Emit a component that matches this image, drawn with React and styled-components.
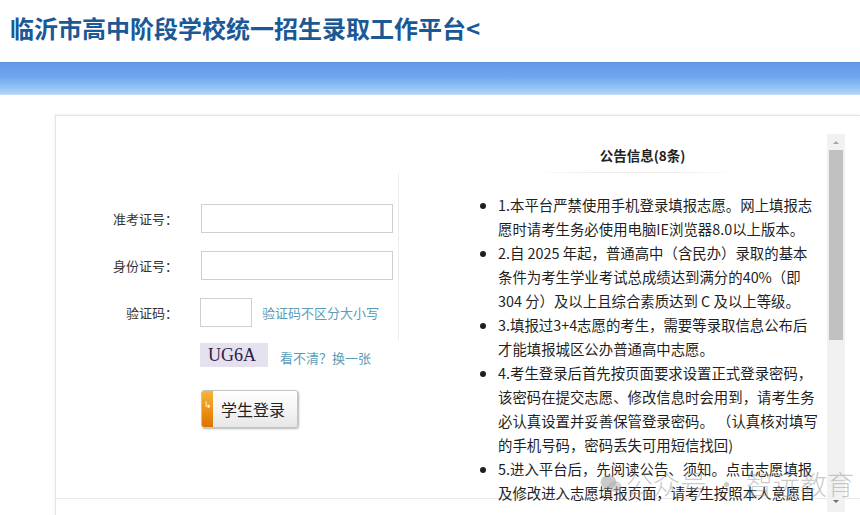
import React from "react";
import styled, { createGlobalStyle } from "styled-components";

const GlobalStyle = createGlobalStyle`
  html, body {
    margin: 0;
    padding: 0;
    background: #ffffff;
    overflow: hidden;
  }
  body {
    font-family: "Noto Sans CJK SC", "Noto Sans", sans-serif;
    color: #222;
  }
`;

const Page = styled.div`
  position: relative;
  width: 860px;
  height: 515px;
  overflow: hidden;
`;

const Header = styled.header`
  height: 62px;
  padding: 13px 0 0 10px;
  box-sizing: border-box;
`;

const Title = styled.h1`
  margin: 0;
  font-size: 24px;
  line-height: 30px;
  font-weight: 700;
  color: #1b5896;
`;

const Banner = styled.div`
  height: 33px;
  box-sizing: border-box;
  border-top: 1px solid #5d8fd4;
  border-bottom: 1px solid #c4dcf4;
  background: linear-gradient(to bottom, #6699e6 0%, #6ea5ee 45%, #8fc0f5 75%, #b2d4f8 100%);
`;

const Content = styled.div`
  padding: 20px 0 0 55px;
`;

const Card = styled.div`
  border-top: 1px solid #f0e0d9;
  border-left: 1px solid #f0e0d9;
  box-shadow: -1px -1px 2px rgba(230, 200, 190, 0.25);
  height: 420px;
`;

const Main = styled.div`
  display: flex;
  align-items: flex-start;
  height: 382px;
  border-bottom: 1px solid #efe7e4;
`;

const FormPanel = styled.div`
  width: 343px;
  margin-top: 57px;
`;

const Fields = styled.div`
  display: grid;
  grid-template-columns: 122px 192px;
  grid-auto-rows: 29px;
  column-gap: 23px;
  row-gap: 18px;
  align-items: center;
  height: 168px;
  box-sizing: border-box;
  padding: 31px 5px 0 0;
  border-right: 1px solid #ececec;
`;

const Label = styled.label`
  text-align: right;
  font-size: 13px;
  color: #333;
`;

const Input = styled.input`
  box-sizing: border-box;
  width: ${({ $w }) => $w || "192px"};
  height: 29px;
  border: 1px solid #cfcfcf;
  background: #fff;
  outline: none;
`;

const CodeRow = styled.div`
  display: flex;
  align-items: center;
  gap: 10px;
  margin-left: -1px;
`;

const Hint = styled.span`
  font-size: 13px;
  color: #5b9db8;
  white-space: nowrap;
`;

const Extras = styled.div`
  display: flex;
  flex-direction: column;
  align-items: flex-start;
  padding: 2px 0 0 144px;
`;

const CaptchaRow = styled.div`
  display: flex;
  align-items: flex-end;
  gap: 12px;
`;

const Captcha = styled.div`
  width: 68px;
  height: 24px;
  background: #e5e1ef;
  font-family: "Liberation Serif", "DejaVu Serif", serif;
  font-size: 18px;
  line-height: 24px;
  color: #2a1c48;
  padding-left: 8px;
  box-sizing: border-box;
`;

const LoginButton = styled.button`
  display: flex;
  align-items: stretch;
  margin-top: 23px;
  margin-left: 1px;
  width: 97px;
  height: 38px;
  padding: 0;
  border: 1px solid #c4c4c4;
  border-radius: 3px;
  background: linear-gradient(to bottom, #ffffff 0%, #f4f4f4 55%, #e6e6e6 100%);
  box-shadow: 1px 1px 2px rgba(0, 0, 0, 0.3);
  overflow: hidden;
  cursor: pointer;
  font-family: inherit;
`;

const Stripe = styled.span`
  width: 11px;
  background: linear-gradient(to bottom, #f6b43a 0%, #ea8d10 60%, #d97400 100%);
  color: #fff;
  font-size: 9px;
  line-height: 1;
  padding-top: 9px;
  text-align: center;
`;

const ButtonText = styled.span`
  flex: 1;
  font-size: 16px;
  line-height: 36px;
  color: #222;
  text-align: left;
  padding-left: 8px;
`;

const NoticePanel = styled.section`
  display: flex;
  margin: 18px 0 0 59px;
  width: 387px;
  height: 378px;
`;

const NoticeBody = styled.div`
  flex: 1;
  overflow: hidden;
  padding-top: 9px;
`;

const NoticeTitle = styled.h2`
  margin: 0;
  font-size: 13.5px;
  line-height: 24px;
  font-weight: 700;
  text-align: center;
  color: #222;
`;

const Divider = styled.div`
  width: 180px;
  height: 1px;
  margin: 5px auto 20px;
  background: linear-gradient(to right, #fafafa, #ececec 30%, #ececec 70%, #fafafa);
  transform: translateX(-8px);
`;

const List = styled.ul`
  margin: 0;
  padding-left: 40px;
  font-size: 14.4px;
  line-height: 24px;
  color: #1f1f1f;
`;

const Item = styled.li``;

const Line = styled.span`
  display: block;
  white-space: nowrap;
`;

const ScrollTrack = styled.div`
  width: 18px;
  background: #f1f1f1;
  display: flex;
  flex-direction: column;
  align-items: center;
`;

const Arrow = styled.span`
  width: 0;
  height: 0;
  border-left: 3px solid transparent;
  border-right: 3px solid transparent;
  ${({ $down }) =>
    $down
      ? "border-top: 3px solid #6e6e6e; margin: auto 0 9px;"
      : "border-bottom: 3px solid #a8a8a8; margin: 7px 0 6px;"}
`;

const Thumb = styled.div`
  width: 14px;
  height: 190px;
  background: #c1c1c1;
`;

const Watermark = styled.div`
  position: absolute;
  left: 600px;
  top: 464px;
  display: flex;
  align-items: center;
  gap: 4px;
  font-size: 27px;
  font-weight: 300;
  color: rgba(150, 150, 150, 0.5);
  white-space: nowrap;
  pointer-events: none;
`;

const notices = [
  [
    "1.本平台严禁使用手机登录填报志愿。网上填报志",
    "愿时请考生务必使用电脑IE浏览器8.0以上版本。",
  ],
  [
    "2.自 2025 年起，普通高中（含民办）录取的基本",
    "条件为考生学业考试总成绩达到满分的40%（即",
    "304 分）及以上且综合素质达到 C 及以上等级。",
  ],
  [
    "3.填报过3+4志愿的考生，需要等录取信息公布后",
    "才能填报城区公办普通高中志愿。",
  ],
  [
    "4.考生登录后首先按页面要求设置正式登录密码，",
    "该密码在提交志愿、修改信息时会用到，请考生务",
    "必认真设置并妥善保管登录密码。 （认真核对填写",
    "的手机号码，密码丢失可用短信找回)",
  ],
  [
    "5.进入平台后，先阅读公告、须知。点击志愿填报",
    "及修改进入志愿填报页面，请考生按照本人意愿自",
  ],
];

const ChatIcon = () => (
  <svg width="22" height="20" viewBox="0 0 22 20">
    <ellipse cx="8.5" cy="8" rx="8" ry="6.8" fill="rgba(150,150,150,0.5)" />
    <path d="M4 13 L3 17 L7.5 14.2 Z" fill="rgba(150,150,150,0.5)" />
    <ellipse cx="15" cy="12.5" rx="6.5" ry="5.5" fill="rgba(175,175,175,0.5)" />
  </svg>
);

const App = () => {
  return (
    <Page>
      <GlobalStyle />
      <Header>
        <Title>临沂市高中阶段学校统一招生录取工作平台&lt;</Title>
      </Header>
      <Banner />
      <Content>
        <Card>
          <Main>
            <FormPanel>
              <Fields>
                <Label>准考证号：</Label>
                <Input type="text" />
                <Label>身份证号：</Label>
                <Input type="text" />
                <Label>验证码：</Label>
                <CodeRow>
                  <Input type="text" $w="52px" />
                  <Hint>验证码不区分大小写</Hint>
                </CodeRow>
              </Fields>
              <Extras>
                <CaptchaRow>
                  <Captcha>UG6A</Captcha>
                  <Hint>看不清？换一张</Hint>
                </CaptchaRow>
                <LoginButton type="button">
                  <Stripe>↳</Stripe>
                  <ButtonText>学生登录</ButtonText>
                </LoginButton>
              </Extras>
            </FormPanel>
            <NoticePanel>
              <NoticeBody>
                <NoticeTitle>公告信息(8条)</NoticeTitle>
                <Divider />
                <List>
                  {notices.map((lines, i) => (
                    <Item key={i}>
                      {lines.map((l, j) => (
                        <Line key={j}>{l}</Line>
                      ))}
                    </Item>
                  ))}
                </List>
              </NoticeBody>
              <ScrollTrack>
                <Arrow />
                <Thumb />
                <Arrow $down />
              </ScrollTrack>
            </NoticePanel>
          </Main>
        </Card>
      </Content>
      <Watermark>
        <ChatIcon />
        <span>公众号 · 智远教育</span>
      </Watermark>
    </Page>
  );
};

export default App;
